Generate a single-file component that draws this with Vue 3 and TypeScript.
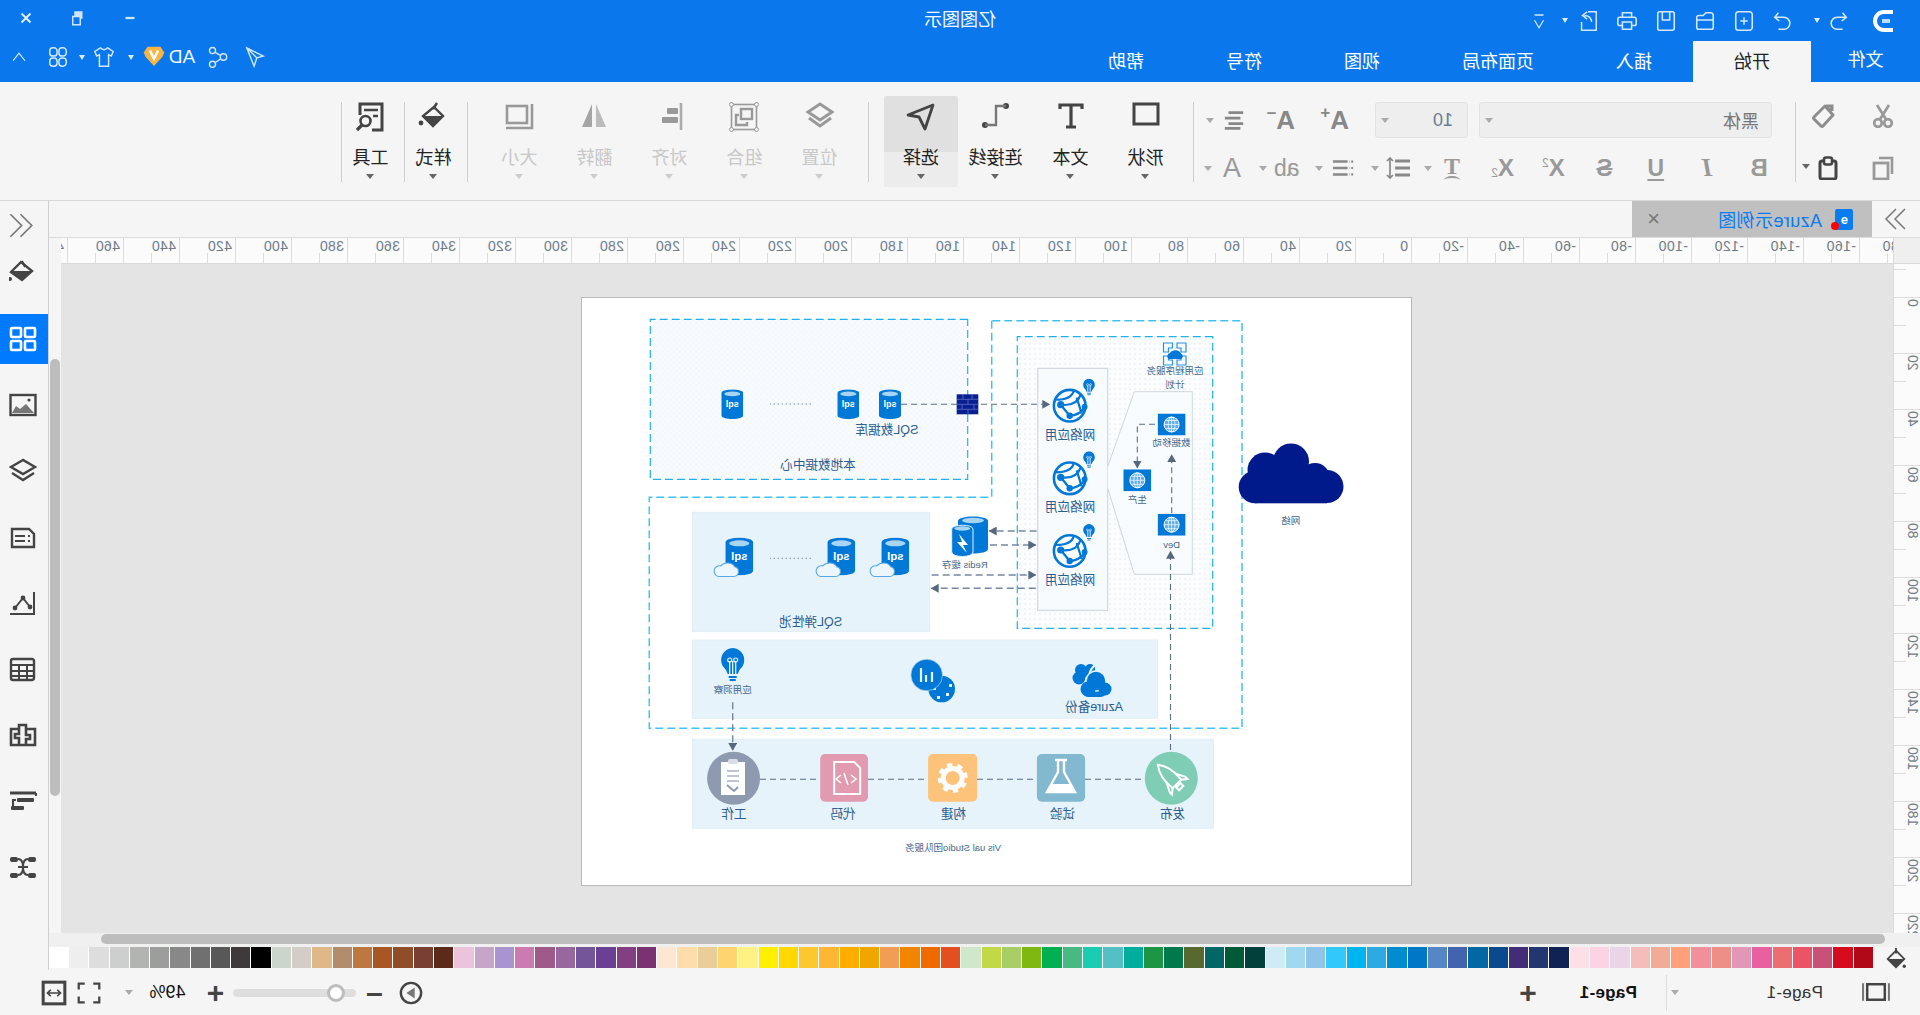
<script setup lang="ts">
const G = '#999'
const D = '#444'
const W = '#fff'
const icons: Record<string, string> = {
  logo: `<path d="M4 4H13A9 9 0 0 1 13 22H4" fill="none" stroke="${W}" stroke-width="4"/><path d="M7 13H15" stroke="#b9dcff" stroke-width="4"/>`,
  undo: `<path d="M7 3L3 8L8 12M4 8H13A6.5 6.5 0 0 1 13 21H7" fill="none" stroke="#d4e8ff" stroke-width="1.7"/>`,
  redo: `<path d="M17 3L21 8L16 12M20 8H11A6.5 6.5 0 0 0 11 21H17" fill="none" stroke="#d4e8ff" stroke-width="1.7"/>`,
  newf: `<rect x="3" y="2" width="18" height="20" rx="3" fill="none" stroke="#d4e8ff" stroke-width="1.7"/><path d="M8 12H16M12 8V16" stroke="#d4e8ff" stroke-width="1.6"/>`,
  open: `<path d="M3 20V6Q3 3 6 3H11L14 6H19Q21 6 21 8V19Q21 21 19 21H5Q3 21 3 19ZM3 11H21" fill="none" stroke="#d4e8ff" stroke-width="1.7"/>`,
  save: `<path d="M3 4Q3 2 5 2H19Q21 2 21 4V20Q21 22 19 22H5Q3 22 3 20ZM8 2V11H16V2M8 22" fill="none" stroke="#d4e8ff" stroke-width="1.7"/>`,
  print: `<path d="M7 8V3H17V8M7 17H4Q2 17 2 15V10Q2 8 4 8H20Q22 8 22 10V15Q22 17 20 17H17M7 13H17V21H7Z" fill="none" stroke="#d4e8ff" stroke-width="1.7"/>`,
  exportf: `<path d="M12 2H3V22H19V13M8 13Q9 6 16 6M13 2L18 6L13 10" fill="none" stroke="#d4e8ff" stroke-width="1.6"/>`,
  more: `<path d="M6 4H18" stroke="#d4e8ff" stroke-width="2"/><path d="M6 11L12 21L18 11" fill="none" stroke="#d4e8ff" stroke-width="1.6"/>`,
  minimize: `<path d="M6 12H18" stroke="#cfe5ff" stroke-width="3"/>`,
  restore: `<rect x="6" y="3" width="11" height="10" fill="#cfe5ff"/><rect x="9" y="10" width="10" height="11" fill="#0a78ec" stroke="#cfe5ff" stroke-width="2"/>`,
  closew: `<path d="M6 6L18 18M18 6L6 18" stroke="#e6f1ff" stroke-width="2.4"/>`,
  chevup: `<path d="M4 17L12 7L20 17" fill="none" stroke="#e0eeff" stroke-width="1.6"/>`,
  tiles: `<rect x="3" y="2" width="8" height="9" rx="3.5" fill="none" stroke="#d4e8ff" stroke-width="1.6"/><rect x="13" y="2" width="8" height="9" rx="3.5" fill="none" stroke="#d4e8ff" stroke-width="1.6"/><rect x="3" y="13" width="8" height="9" rx="3.5" fill="none" stroke="#d4e8ff" stroke-width="1.6"/><rect x="13" y="13" width="8" height="9" rx="3.5" fill="none" stroke="#d4e8ff" stroke-width="1.6"/>`,
  shirt: `<path d="M8 2L2 6L4 11L7 9.5V22H17V9.5L20 11L22 6L16 2Q12 6 8 2Z" fill="none" stroke="#d4e8ff" stroke-width="1.6"/>`,
  badge: `<path d="M5 2H19L23 8Q23 10 21 13L12 23L3 13Q1 10 1 8Z" fill="#f9b443"/><path d="M7.5 6L12 15L16.5 6" fill="none" stroke="#fff" stroke-width="2.8"/>`,
  share: `<circle cx="18" cy="5" r="3.3" fill="none" stroke="#d4e8ff" stroke-width="1.5"/><circle cx="6" cy="12" r="3.5" fill="none" stroke="#d4e8ff" stroke-width="1.5"/><circle cx="18" cy="20" r="3.3" fill="none" stroke="#d4e8ff" stroke-width="1.5"/><path d="M15 7L9 10.5M9 14L15 18" stroke="#d4e8ff" stroke-width="1.5"/>`,
  send: `<path d="M21 2L3 11L10 13L13 22ZM21 2L10 13" fill="none" stroke="#d4e8ff" stroke-width="1.5"/>`,
  cut: `<circle cx="7" cy="19" r="3.8" fill="none" stroke="${G}" stroke-width="2.7"/><circle cx="17" cy="19" r="3.8" fill="none" stroke="${G}" stroke-width="2.7"/><path d="M8.5 16L18 1M15.5 16L6 1" stroke="${G}" stroke-width="2.7"/>`,
  copy: `<rect x="7" y="7" width="14" height="16" fill="none" stroke="${G}" stroke-width="2.8"/><path d="M3 18V2H16" fill="none" stroke="${G}" stroke-width="2.6"/>`,
  painter: `<path d="M14 2L19 6L21 4M14 2L3 13Q2 14 3 15L10 22Q11 23 12 22L22 11Z" fill="none" stroke="#8d8d8d" stroke-width="3" stroke-linejoin="round" transform="matrix(-1 0 0 1 24 0)"/><path d="M9 2H3V7" fill="none" stroke="#8d8d8d" stroke-width="3"/>`,
  paste: `<rect x="4" y="5" width="16" height="18" rx="2" fill="none" stroke="${D}" stroke-width="3"/><rect x="8" y="1.500" width="8" height="7" rx="2" fill="#f5f5f5" stroke="${D}" stroke-width="2.6"/>`,
  align: `<path d="M2 4H18M5 10H22M2 16H18M5 21H22" stroke="#888" stroke-width="3"/>`,
  spacing: `<path d="M2 5H17M2 12H17M2 19H17" stroke="#888" stroke-width="2.8"/><path d="M22 2V22M19 5L22 2L25 5M19 19L22 22L25 19" fill="none" stroke="#888" stroke-width="1.7"/>`,
  list: `<path d="M1 5H5M1 12H5M1 19H5" stroke="#888" stroke-width="2.4" stroke-dasharray="2 1.5"/><path d="M7 5H23M7 12H23M7 19H23" stroke="#888" stroke-width="2.8"/>`,
  shape: `<rect x="2" y="2" width="24" height="20" fill="none" stroke="${D}" stroke-width="3"/>`,
  texticon: `<path d="M3 7V3H25V7M14 3V25M9 25H19" fill="none" stroke="${D}" stroke-width="3.2"/>`,
  connector: `<circle cx="4" cy="4" r="3" fill="${D}"/><circle cx="25" cy="23" r="3" fill="${D}"/><path d="M4 4H14V23H25" fill="none" stroke="#777" stroke-width="2.4"/>`,
  pointer: `<path d="M3 3L28 13L17 15L11 27Z" fill="none" stroke="${D}" stroke-width="2.8" stroke-linejoin="round"/>`,
  layers: `<path d="M14 2L26 10L14 18L2 10Z" fill="none" stroke="${G}" stroke-width="3"/><path d="M3 16L14 24L25 16" fill="none" stroke="${G}" stroke-width="3"/>`,
  group: `<rect x="2.5" y="2.5" width="25" height="25" fill="none" stroke="${G}" stroke-width="1.6"/><circle cx="2.5" cy="2.5" r="2" fill="#f5f5f5" stroke="${G}"/><circle cx="27.5" cy="2.5" r="2" fill="#f5f5f5" stroke="${G}"/><circle cx="2.5" cy="27.5" r="2" fill="#f5f5f5" stroke="${G}"/><circle cx="27.5" cy="27.5" r="2" fill="#f5f5f5" stroke="${G}"/><rect x="7" y="7" width="11" height="10" fill="none" stroke="${G}" stroke-width="2.4"/><path d="M20 13H23V23H12V20" fill="none" stroke="${G}" stroke-width="2.4"/>`,
  alignb: `<path d="M3 1V28" stroke="#aaa" stroke-width="2.6"/><rect x="6" y="6" width="11" height="6" rx="1" fill="${G}"/><rect x="6" y="15" width="16" height="6" rx="1" fill="${G}"/>`,
  flip: `<path d="M3 25L13 2V25Z" fill="#bbb"/><path d="M17 2L27 25H17Z" fill="#a5a5a5"/>`,
  size: `<rect x="7" y="4" width="20" height="17" fill="none" stroke="${G}" stroke-width="2.6"/><path d="M2 2V26H28" fill="none" stroke="${G}" stroke-width="2.6"/>`,
  style: `<path d="M11 1L15 7" stroke="${D}" stroke-width="2.5"/><path d="M14 5L25 14L15 24L5 14Z" fill="none" stroke="${D}" stroke-width="2.4"/><path d="M5 14H25L15 24Z" fill="${D}"/><circle cx="27" cy="21" r="2.400" fill="${D}"/>`,
  tool: `<path d="M25 13V2H3V28H13" fill="none" stroke="${D}" stroke-width="3"/><path d="M7 8H21M7 14H12" stroke="${D}" stroke-width="2.4"/><circle cx="19.500" cy="19" r="5" fill="none" stroke="${D}" stroke-width="2.6"/><path d="M23 23L28 28" stroke="${D}" stroke-width="3.2"/>`,
  bucket: `<path d="M16 3L26 13L15 21L5 12Z" fill="none" stroke="${D}" stroke-width="2.4"/><path d="M5 12H26L15 21Z" fill="${D}"/><path d="M15 2L12 8" stroke="${D}" stroke-width="2"/><circle cx="27" cy="20" r="2" fill="${D}"/>`,
  gridnav: `<rect x="2" y="3" width="10" height="9" rx="1" fill="none" stroke="#fff" stroke-width="2.6"/><rect x="16" y="3" width="10" height="9" rx="1" fill="none" stroke="#fff" stroke-width="2.6"/><rect x="2" y="16" width="10" height="9" rx="1" fill="none" stroke="#fff" stroke-width="2.6"/><rect x="16" y="16" width="10" height="9" rx="1" fill="none" stroke="#fff" stroke-width="2.6"/>`,
  image: `<rect x="1.5" y="4" width="25" height="20" fill="none" stroke="${D}" stroke-width="2.4"/><path d="M3 22L11 13L17 18L21 15L25 22Z" fill="#777"/><circle cx="8" cy="9" r="1.6" fill="${D}"/>`,
  layersnav: `<path d="M14 3L26 10L14 17L2 10Z" fill="none" stroke="${D}" stroke-width="2.4"/><path d="M3 16L14 23L25 16" fill="none" stroke="${D}" stroke-width="2.4"/>`,
  note: `<path d="M3 6H20L25 11V24H3Z" fill="none" stroke="${D}" stroke-width="2.4" transform="matrix(-1 0 0 1 28 0)"/><path d="M7 13H9M7 18H9M12 13H22M12 18H22" stroke="${D}" stroke-width="2"/>`,
  chart: `<path d="M3 3V25H27" fill="none" stroke="${D}" stroke-width="2"/><path d="M7 18L14 9L22 19" fill="none" stroke="${D}" stroke-width="2"/><circle cx="7" cy="18" r="2.4" fill="${D}"/><circle cx="14" cy="9" r="2.4" fill="${D}"/><circle cx="22" cy="19" r="2.4" fill="${D}"/>`,
  table: `<rect x="3" y="4" width="23" height="21" rx="2" fill="none" stroke="${D}" stroke-width="2.4"/><path d="M3 10H26M3 16H26M3 21H26M10 10V25M18 10V25" stroke="${D}" stroke-width="2"/>`,
  puzzle: `<path d="M2 8H11V4H18V8H26V24H2Z M11 8V14H7V18H11V24 M18 8V13H22V17H18V24" fill="none" stroke="${D}" stroke-width="2.6"/>`,
  org: `<path d="M1 6H27" stroke="${D}" stroke-width="3"/><path d="M1 6V9" stroke="${D}" stroke-width="2"/><rect x="3" y="11" width="17" height="4" rx="1" fill="${D}"/><path d="M21 13H24V19" fill="none" stroke="${D}" stroke-width="2"/><rect x="13" y="19" width="13" height="4" rx="1" fill="${D}"/>`,
  links: `<rect x="1" y="4" width="8" height="5" rx="2" fill="${D}"/><rect x="19" y="4" width="8" height="5" rx="2" fill="${D}"/><rect x="1" y="20" width="8" height="5" rx="2" fill="${D}"/><rect x="19" y="20" width="8" height="5" rx="2" fill="${D}"/><path d="M9 6Q14 6 14 14Q14 22 9 22M19 6Q14 6 14 14Q14 22 19 22M9 14H19" fill="none" stroke="${D}" stroke-width="2"/>`,
  picker: `<path d="M12 4L21 13L12 22L3 13Z" fill="none" stroke="${D}" stroke-width="2"/><path d="M3 13H21L12 22Z" fill="${D}"/><path d="M12 1V7" stroke="${D}" stroke-width="2"/><circle cx="3" cy="21" r="1.8" fill="${D}"/>`,
  fit: `<rect x="2" y="2" width="20" height="20" fill="none" stroke="${D}" stroke-width="2.8"/><path d="M6 12H18M9 9L6 12L9 15M15 9L18 12L15 15" fill="none" stroke="${D}" stroke-width="1.6"/>`,
  full: `<path d="M2 9V2H9M19 2H26V9M2 17V24H9M19 24H26V17" fill="none" stroke="${D}" stroke-width="2.6"/>`,
  play: `<circle cx="13" cy="13" r="11" fill="none" stroke="${D}" stroke-width="2.6"/><path d="M18 7V19L9 13Z" fill="#777" transform="matrix(-1 0 0 1 27 0)"/>`,
  sheets: `<rect x="6" y="3" width="17" height="15" fill="none" stroke="${D}" stroke-width="2.4"/><path d="M2 2V19M27 2V19" stroke="#777" stroke-width="2"/>`,
  chevdouble: `<path d="M3 2L13 12L3 22M12 2L22 12L12 22" fill="none" stroke="#777" stroke-width="1.5"/>`,
  chevback: `<path d="M21 2L11 12L21 22M12 2L2 12L12 22" fill="none" stroke="#777" stroke-width="1.5"/>`,
}

const quick = ['newf', 'open', 'save', 'print', 'exportf']
const tabs = ['文件', '开始', '插入', '页面布局', '视图', '符号', '帮助']
const insertBtns = [
  { icon: 'shape', label: '形状' },
  { icon: 'texticon', label: '文本' },
  { icon: 'connector', label: '连接线' },
  { icon: 'pointer', label: '选择', active: true },
]
const arrangeBtns = [
  { icon: 'layers', label: '位置' },
  { icon: 'group', label: '组合' },
  { icon: 'alignb', label: '对齐' },
  { icon: 'flip', label: '翻转' },
  { icon: 'size', label: '大小' },
]
const sideIcons = ['bucket', 'gridnav', 'image', 'layersnav', 'note', 'chart', 'table', 'puzzle', 'org', 'links']

const hValues: number[] = []
for (let v = -180; v <= 480; v += 20) hValues.push(v)
const vValues: number[] = []
for (let v = -20; v <= 220; v += 20) vValues.push(v)

const palette = ['#ffffff','#eeeeee','#dddddd','#cdcfce','#b2b4b2','#9c9e9c','#888888','#707070','#585858','#3e3a39','#000000','#cbd5cb','#d4ccc6','#deb887','#b38b6d','#bd783f','#a85624','#8f4e28','#7a3e32','#5b2a1a','#ebc4dc','#c7a5c8','#aa94cf','#cc7bb0','#9e5a8a','#98679d','#745599','#6a4095','#823f82','#7a3272','#fde7d2','#ffdcaa','#ebcd97','#ffd36e','#fff285','#fff000','#ffd800','#fcc82d','#ffb633','#ffae00','#f0a500','#f39c55','#f28500','#ef6a00','#e44f22','#cfe8ca','#c1d946','#a7cf65','#7fb810','#00b050','#47b983','#19ccb2','#54bfc4','#00ae9e','#1c9644','#00794c','#58692f','#006666','#005a36','#00423b','#cfebf5','#a0d9ef','#8ec3ea','#33c8fb','#00b4f0','#2eaae3','#008dd0','#0078c8','#5687c4','#4264ae','#0168a4','#0a4a8c','#432d77','#223771','#0f2255','#fce0e5','#fcd3e3','#e9d5e7','#f5bdb9','#f0ac97','#ffa07a','#f1909b','#ee8e87','#e297b6','#e860a0','#ec6e72','#ea5466','#c85179','#d60b1e','#b30818'].reverse()

const webApps = [108.7, 181.3, 254]
const slots = [
  { x: 240.4, y: 127.5, label: '数据移动', ly: 145.7 },
  { x: 274.7, y: 183.3, label: '生产', ly: 202 },
  { x: 240.4, y: 227.7, label: 'Dev', ly: 247.7 },
]
const sqlCloud = [672.7, 570.7, 516.7]
const squares = [
  { x: 544, w: 47.8, c: '#e29ab0' },
  { x: 434.8, w: 49.1, c: '#fdc37b' },
  { x: 326.9, w: 48.2, c: '#82b8d0' },
]
const flowLabels = [
  { x: 678, t: '工作' },
  { x: 569, t: '代码' },
  { x: 458.6, t: '构建' },
  { x: 349.4, t: '试验' },
  { x: 239.5, t: '发布' },
]
</script>

<template>
  <div class="app">
    <header class="chrome">
      <div class="title-row">
        <svg class="ic logo" viewBox="0 0 24 26" v-html="icons.logo"></svg>
        <svg class="ic t22 ml24" viewBox="0 0 24 24" v-html="icons.undo"></svg>
        <i class="caret white m-caret"></i>
        <svg class="ic t22 ml21" viewBox="0 0 24 24" v-html="icons.redo"></svg>
        <svg v-for="q in quick" :key="q" class="ic t22 ml17" viewBox="0 0 24 24" v-html="icons[q]"></svg>
        <i class="caret white m-caret2"></i>
        <svg class="ic t18 ml14" viewBox="0 0 24 24" v-html="icons.more"></svg>
        <span class="app-title">亿图图示</span>
        <div class="win">
          <span class="win-btn"><svg class="ic t18" viewBox="0 0 24 24" v-html="icons.minimize"></svg></span>
          <span class="win-btn"><svg class="ic t18" viewBox="0 0 24 24" v-html="icons.restore"></svg></span>
          <span class="win-btn"><svg class="ic t18" viewBox="0 0 24 24" v-html="icons.closew"></svg></span>
        </div>
      </div>
      <div class="tab-row">
        <span v-for="(t, i) in tabs" :key="t" class="tab" :class="{ on: i === 1, first: i === 0 }">{{ t }}</span>
        <div class="tools">
          <svg class="ic t22 w36" viewBox="0 0 24 24" v-html="icons.send"></svg>
          <svg class="ic t22 w38" viewBox="0 0 24 24" v-html="icons.share"></svg>
          <span class="ad">AD</span>
          <svg class="ic badge" viewBox="0 0 24 24" v-html="icons.badge"></svg>
          <i class="caret white m-a"></i>
          <svg class="ic t22 ml13" viewBox="0 0 24 24" v-html="icons.shirt"></svg>
          <i class="caret white m-b"></i>
          <svg class="ic t22" viewBox="0 0 24 24" v-html="icons.tiles"></svg>
          <svg class="ic t18 chev" viewBox="0 0 24 24" v-html="icons.chevup"></svg>
        </div>
      </div>
    </header>

    <section class="ribbon">
      <div class="clip">
        <span class="cell"><svg class="ic t24" viewBox="0 0 24 24" v-html="icons.cut"></svg></span>
        <span class="cell"><svg class="ic t24" viewBox="0 0 24 24" v-html="icons.painter"></svg></span>
        <span class="cell"><svg class="ic t24" viewBox="0 0 24 24" v-html="icons.copy"></svg></span>
        <span class="cell pastecell"><svg class="ic t24" viewBox="0 0 24 24" v-html="icons.paste"></svg><i class="caret dark c-right"></i></span>
      </div>
      <i class="sep"></i>
      <div class="fontbox">
        <div class="fontrow">
          <div class="sel font-sel"><span class="sel-text">黑体</span><i class="caret soft"></i></div>
          <div class="sel size-sel"><span class="sel-num">10</span><i class="caret soft"></i></div>
          <span class="glyph grow">A<sup>+</sup></span>
          <span class="glyph shrink">A<sup>–</sup></span>
          <span class="fcell align"><svg class="ic t22" viewBox="0 0 24 24" v-html="icons.align"></svg><i class="caret soft cc"></i></span>
        </div>
        <div class="fmt">
          <span class="fcell b">B</span>
          <span class="fcell it">I</span>
          <span class="fcell un">U</span>
          <span class="fcell st">S</span>
          <span class="fcell xs">X<sup>2</sup></span>
          <span class="fcell xs">X<sub>2</sub></span>
          <span class="fcell tt">T<i class="arc"></i><i class="caret soft cc"></i></span>
          <span class="fcell"><svg class="ic sp" viewBox="0 0 26 24" v-html="icons.spacing"></svg><i class="caret soft cc"></i></span>
          <span class="fcell"><svg class="ic t22" viewBox="0 0 24 24" v-html="icons.list"></svg><i class="caret soft cc"></i></span>
          <span class="fcell ab">ab<i class="caret soft cc"></i></span>
          <span class="fcell la">A<i class="caret soft cc"></i></span>
        </div>
      </div>
      <i class="sep"></i>
      <div class="bigs first-bigs">
        <div v-for="b in insertBtns" :key="b.label" class="big" :class="{ active: b.active }">
          <svg class="ic big-ic" viewBox="0 0 30 30" v-html="icons[b.icon]"></svg>
          <span class="big-label">{{ b.label }}</span>
          <i class="caret dark"></i>
        </div>
      </div>
      <i class="sep sep-a"></i>
      <div class="bigs second-bigs">
        <div v-for="b in arrangeBtns" :key="b.label" class="big off">
          <svg class="ic big-ic" viewBox="0 0 30 30" v-html="icons[b.icon]"></svg>
          <span class="big-label">{{ b.label }}</span>
          <i class="caret light"></i>
        </div>
      </div>
      <i class="sep sep-b"></i>
      <div class="big narrow">
        <svg class="ic big-ic" viewBox="0 0 30 30" v-html="icons.style"></svg>
        <span class="big-label">样式</span>
        <i class="caret dark"></i>
      </div>
      <i class="sep"></i>
      <div class="big narrow">
        <svg class="ic big-ic" viewBox="0 0 30 30" v-html="icons.tool"></svg>
        <span class="big-label">工具</span>
        <i class="caret dark"></i>
      </div>
      <i class="sep"></i>
    </section>

    <main class="main">
      <div class="workspace">
        <div class="tabstrip">
          <svg class="ic dbl" viewBox="0 0 24 24" v-html="icons.chevdouble"></svg>
          <div class="doc-tab">
            <span class="doc-logo"><i class="doc-dot"></i><b>e</b></span>
            <span class="doc-name">Azure示例图</span>
            <span class="doc-x">×</span>
          </div>
        </div>
        <div class="work">
          <div class="rulered">
            <div class="hrow">
              <div class="corner"></div>
              <div class="hruler">
                <div v-for="v in hValues" :key="v" class="hcell"><span>{{ v }}</span></div>
              </div>
            </div>
            <div class="body">
              <div class="vruler">
                <div v-for="v in vValues" :key="v" class="vcell"><span v-if="v >= 0">{{ v }}</span></div>
              </div>
              <div class="canvas">
                <div class="page">
                  <svg class="diagram" width="831" height="589" viewBox="0 0 831 589">
                    <defs>
                      <pattern id="hatch" width="4" height="4" patternUnits="userSpaceOnUse" patternTransform="rotate(45)">
                        <rect width="4" height="4" fill="#f9fcfe" />
                        <path d="M0 0H4M0 0V4" stroke="#eef5fa" stroke-width="1" />
                      </pattern>
                      <pattern id="dots" width="5" height="5" patternUnits="userSpaceOnUse">
                        <rect width="5" height="5" fill="#fcfdfe" />
                        <circle cx="2" cy="2" r=".7" fill="#dbe6ef" />
                      </pattern>
                      <marker id="arr" viewBox="0 0 10 10" refX="9" refY="5" markerWidth="8" markerHeight="9" markerUnits="userSpaceOnUse" orient="auto-start-reverse" preserveAspectRatio="none">
                        <path d="M0 0L10 5L0 10Z" fill="#56677f" />
                      </marker>
                      <symbol id="db" viewBox="0 0 22 30">
                        <path d="M0 4C0 -1 22 -1 22 4V26C22 31 0 31 0 26Z" fill="#0078d7" />
                        <ellipse cx="11" cy="4.6" rx="8" ry="2.4" fill="#a9d5f5" />
                        <text x="11" y="18" class="sqltxt">sql</text>
                      </symbol>
                      <symbol id="cloudline" viewBox="0 0 28 18">
                        <path d="M6.5 17A5 5 0 0 1 5.5 7.2A8 6.4 0 0 1 19.5 6.4A5.4 5.4 0 0 1 22 17Z" fill="#edf6fb" stroke="#57a9e6" stroke-width="1.1" />
                      </symbol>
                      <symbol id="webapp" viewBox="-18 -18 36 36">
                        <circle r="15.8" fill="#fbfdff" stroke="#0078d7" stroke-width="2.6" />
                        <path d="M-11 -11Q-7 1 9 -1M-4 -15Q-2 -6 14 -6M9 -1L0 10M-16 1Q-9 10 0 10M-7 -8L-12 8" fill="none" stroke="#0078d7" stroke-width="2.2" />
                        <circle cx="9" cy="-1" r="3.6" fill="#0078d7" />
                        <circle cx="0" cy="10" r="3.2" fill="#0078d7" />
                        <circle cx="-15" cy="1" r="3" fill="#0078d7" />
                      </symbol>
                      <symbol id="bulb" viewBox="0 0 24 36">
                        <path d="M12 0A12 12 0 0 1 22 18Q18 22 17 26H7Q6 22 2 18A12 12 0 0 1 12 0Z" fill="#0078d7" />
                        <path d="M9 26V13M15 26V13M12 26V13" stroke="#e6f3fa" stroke-width="1.3" />
                        <circle cx="9" cy="12" r="2" fill="none" stroke="#e6f3fa" stroke-width="1.2" />
                        <circle cx="15" cy="12" r="2" fill="none" stroke="#e6f3fa" stroke-width="1.2" />
                        <path d="M8 29H16M9 32H15" stroke="#0078d7" stroke-width="1.8" />
                      </symbol>
                      <symbol id="slot" viewBox="0 0 28 22">
                        <rect width="28" height="22" fill="#0078d7" />
                        <circle cx="14" cy="11" r="7.5" fill="#62aee8" stroke="#fff" stroke-width="1" />
                        <path d="M6.5 11H21.5M14 3.5V18.5M8 7H20M8 15H20" stroke="#fff" stroke-width=".7" />
                        <ellipse cx="14" cy="11" rx="3.4" ry="7.5" fill="none" stroke="#fff" stroke-width=".7" />
                      </symbol>
                    </defs>

                    <path d="M420.3 23.7V200.3H762.7V431.3H170V23.7Z" class="outer" />

                    <rect x="444.3" y="22.3" width="317.4" height="160" fill="url(#hatch)" class="dash" />
                    <text x="594" y="168" class="t12">本地数据中心</text>
                    <use href="#db" x="668.7" y="92.3" width="22" height="30" />
                    <use href="#db" x="552.7" y="92.3" width="22" height="30" />
                    <use href="#db" x="511" y="92.3" width="22" height="30" />
                    <text x="525" y="133" class="t12">SQL数据库</text>
                    <path d="M601 107H642" class="dotted" />

                    <rect x="199.3" y="39.7" width="195.4" height="291.6" fill="url(#dots)" class="dash" />

                    <rect x="304.3" y="71.3" width="70" height="242" fill="#f7fbfe" stroke="#c9d2de" />
                    <g v-for="y in webApps" :key="y">
                      <use href="#webapp" :x="324.3" :y="y - 18" width="36" height="36" />
                      <use href="#bulb" x="317" :y="y - 27" width="12" height="18" />
                      <text x="342" :y="y + 29" class="t12">网络应用</text>
                    </g>

                    <path d="M304.3 169.7L277.7 94.7H219.7V277.3H277.7L304.3 191.3" fill="#f9fcfe" stroke="#cfd6df" />
                    <use v-for="s in slots" :key="s.label" href="#slot" :x="s.x - 14" :y="s.y - 11" width="28" height="22" />
                    <text v-for="s in slots" :key="s.ly" :x="s.x" :y="s.ly" class="t9">{{ s.label }}</text>

                    <g>
                      <path d="M226 46H235V51H231V55H226ZM248.5 46H239.5V51H243.5V55H248.5ZM226 68H235V63H231V59H226ZM248.5 68H239.5V63H243.5V59H248.5Z" fill="#f5fafd" stroke="#2f8fe0" stroke-width="1.2" />
                      <path d="M231 62A3 3 0 0 1 231 56.5A6 5 0 0 1 242 56A3.2 3.2 0 0 1 243 62Z" fill="#0078d7" />
                    </g>
                    <text x="237" y="73.3" class="t9">应用程序服务</text>
                    <text x="237" y="87.7" class="t9">计划</text>

                    <g fill="#001a8c">
                      <circle cx="121" cy="164.5" r="18" />
                      <circle cx="147" cy="173" r="17.5" />
                      <circle cx="97" cy="181" r="15" />
                      <circle cx="85" cy="189.5" r="16.5" />
                      <circle cx="157" cy="190" r="16.3" />
                      <rect x="85" y="178" width="72" height="28.3" />
                    </g>
                    <text x="121.3" y="223.3" class="t9">网络</text>

                    <rect x="482.3" y="215.3" width="237.4" height="119.4" class="band" />
                    <text x="601.3" y="325" class="t12">SQL弹性池</text>
                    <g v-for="x in sqlCloud" :key="x">
                      <use href="#db" :x="x - 14" y="240.5" width="28" height="38" />
                      <use href="#cloudline" :x="x - 1" y="262.5" width="28" height="18" />
                    </g>
                    <path d="M601 261.3H642" class="dotted" />

                    <g>
                      <path d="M424 224C424 218 454 218 454 224V252C454 258 424 258 424 252Z" fill="#0078d7" />
                      <ellipse cx="439" cy="223.5" rx="11" ry="2.800" fill="#a9d5f5" />
                      <path d="M439 232C439 227 460.3 227 460.3 232V255C460.3 261 439 261 439 255Z" fill="#0078d7" stroke="#e8f2f9" stroke-width="1" />
                      <ellipse cx="449.700" cy="231.500" rx="8" ry="2.200" fill="#a9d5f5" />
                      <path d="M453 237L444 248H449L445 256L455 245H450Z" fill="#fff" />
                    </g>
                    <text x="447.3" y="267" class="t9">Redis 缓存</text>

                    <rect x="254.3" y="343" width="465.4" height="78.3" class="band" />
                    <use href="#bulb" x="667.3" y="351" width="24" height="36" />
                    <text x="679.3" y="392.7" class="t9">应用洞察</text>
                    <g>
                      <circle cx="470.3" cy="392" r="13.3" fill="#0078d7" />
                      <rect x="463" y="396" width="3" height="3" fill="#e6f3fa" />
                      <rect x="472" y="399" width="3" height="3" fill="#e6f3fa" />
                      <rect x="476" y="390" width="3" height="3" fill="#e6f3fa" />
                      <rect x="460" y="387" width="3" height="3" fill="#e6f3fa" />
                      <circle cx="485.3" cy="378" r="15.8" fill="#0078d7" stroke="#cfe5f5" stroke-width=".6" />
                      <path d="M480 375V385M486 378V385M491 371V385" stroke="#e6f3fa" stroke-width="2.2" />
                    </g>
                    <g fill="#0078d7">
                      <circle cx="331" cy="373" r="6" />
                      <circle cx="322" cy="372" r="5" />
                      <circle cx="333" cy="381" r="6.5" />
                      <rect x="317" y="370" width="14" height="10" />
                      <path d="M317 368Q326 377 320 380" fill="none" stroke="#e6f3fa" stroke-width="2" />
                      <rect x="305" y="386" width="25" height="14" rx="6.5" />
                      <circle cx="316" cy="384" r="10" stroke="#e6f3fa" stroke-width="1.5" />
                      <circle cx="307" cy="392" r="6.5" />
                      <circle cx="324" cy="392" r="7.5" />
                    </g>
                    <text x="318" y="410.3" class="t12">Azure备份</text>

                    <rect x="198.4" y="442.3" width="521.1" height="89" class="band" />
                    <path d="M652 482.3H592M544 482.3H484M435 482.3H375M327 482.3H267" class="flow" />

                    <circle cx="678.4" cy="481.3" r="26.5" fill="#8e9ab0" />
                    <rect x="667" y="465" width="24" height="33" fill="#fff" />
                    <rect x="674" y="462" width="10" height="5" rx="2" fill="#d8dde6" />
                    <path d="M673 474H685M673 479H685M673 484H685" stroke="#aab4c4" stroke-width="1.5" />
                    <path d="M674 490L678 494L685 488" fill="none" stroke="#8e9ab0" stroke-width="2" />

                    <rect v-for="s in squares" :key="s.x" :x="s.x" y="457" :width="s.w" height="47.7" rx="5" :fill="s.c" />
                    <path d="M558 465H578L584 471V497H558Z" fill="none" stroke="#fff" stroke-width="2" transform="matrix(-1 0 0 1 1135.8 0)" />
                    <path d="M561 478L556 482L561 486M571 478L576 482L571 486M568 476L564 488" fill="none" stroke="#fff" stroke-width="1.5" />
                    <circle cx="459.3" cy="481" r="9.5" fill="none" stroke="#fff" stroke-width="5" />
                    <circle cx="459.3" cy="481" r="13" fill="none" stroke="#fff" stroke-width="4" stroke-dasharray="5.2 5" />
                    <path d="M345 463H357M347 463H355M348 463V475L337 495H365L354 475V463" fill="none" stroke="#fff" stroke-width="2.4" />
                    <path d="M342 487H360L364 495H338Z" fill="#fff" />

                    <circle cx="240.7" cy="481.3" r="26.5" fill="#7fcdb4" />
                    <g transform="translate(240.7 481.3) rotate(45)" fill="none" stroke="#fff" stroke-width="2">
                      <path d="M0 -19Q8 -9 6 8H-6Q-8 -9 0 -19Z" />
                      <path d="M-6 -1L-11 9V12L-6 8M6 -1L11 9V12L6 8M-3 10H3V14H-3Z" />
                    </g>
                    <text v-for="f in flowLabels" :key="f.t" :x="f.x" y="517" class="t12">{{ f.t }}</text>
                    <text x="459" y="550.7" class="t9 vs">Vis ual Studio团队服务</text>

                    <path d="M511 107.3H362.5" class="flow" marker-end="url(#arr)" />
                    <g>
                      <rect x="433.7" y="97.3" width="21.6" height="20" fill="#0a1f8f" />
                      <path d="M433.7 102.3H455.3M433.7 107.3H455.3M433.7 112.3H455.3M440 97.3V102.3M449 97.3V102.3M444 102.3V107.3M438 107.3V112.3M450 107.3V112.3M444 112.3V117.3" stroke="#5f6fc8" stroke-width=".8" fill="none" />
                    </g>
                    <path d="M257 127.3H274.7V170.7" class="flow" marker-end="url(#arr)" />
                    <path d="M240.3 216.3V158" class="flow" marker-end="url(#arr)" />
                    <path d="M241.5 453V254.5" class="flow" marker-end="url(#arr)" />
                    <path d="M375.3 234H422.5" class="flowb" marker-end="url(#arr)" />
                    <path d="M422 248H376.5" class="flowb" marker-end="url(#arr)" />
                    <path d="M480.3 278H376.5" class="flowb" marker-end="url(#arr)" />
                    <path d="M376.3 291.3H480.5" class="flowb" marker-end="url(#arr)" />
                    <path d="M679.3 405.3V453" class="flowb" marker-end="url(#arr)" />
                  </svg>
                </div>
              </div>
            </div>
          </div>
          <div class="vscroll"><i class="vthumb"></i></div>
        </div>
        <div class="hscroll"><i class="hthumb"></i></div>
        <div class="palette-row">
          <svg class="ic pick" viewBox="0 0 24 24" v-html="icons.picker"></svg>
          <div class="palette">
            <span v-for="(c, i) in palette" :key="i" class="swatch" :style="{ background: c }"></span>
          </div>
        </div>
      </div>
      <aside class="sidebar">
        <div class="side-top"><svg class="ic t27" viewBox="0 0 24 24" v-html="icons.chevback"></svg></div>
        <div class="side-list">
          <span v-for="s in sideIcons" :key="s" class="side-item" :class="{ on: s === 'gridnav' }">
            <svg class="ic side-ic" viewBox="0 0 28 28" v-html="icons[s]"></svg>
          </span>
        </div>
      </aside>
    </main>

    <footer class="status">
      <svg class="ic sheet" viewBox="0 0 29 22" v-html="icons.sheets"></svg>
      <span class="pg">Page-1</span>
      <i class="caret soft st-caret"></i>
      <i class="st-sep"></i>
      <span class="pg bold">Page-1</span>
      <span class="plus addp">+</span>
      <div class="zoomer">
        <svg class="ic t24" viewBox="0 0 26 26" v-html="icons.play"></svg>
        <span class="plus minus">–</span>
        <div class="slider"><i class="knob"></i></div>
        <span class="plus zplus">+</span>
        <span class="pct">49%</span>
        <i class="caret soft zc"></i>
        <svg class="ic fullic" viewBox="0 0 28 26" v-html="icons.full"></svg>
        <svg class="ic fitic" viewBox="0 0 24 24" v-html="icons.fit"></svg>
      </div>
    </footer>
  </div>
</template>

<style>
html, body { margin: 0; background: #f5f5f5; overflow: hidden; }
</style>

<style scoped>
.app {
  width: 1920px; height: 1015px; overflow: hidden; position: relative;
  transform: scaleX(-1); background: #f5f5f5;
  font-family: "Liberation Sans", "Noto Sans CJK SC", sans-serif; color: #222;
  display: flex; flex-direction: column;
}
.ic { display: block; flex: none; }
.t18 { width: 18px; height: 18px; }
.t22 { width: 22px; height: 22px; }
.t24 { width: 24px; height: 24px; }
.t27 { width: 27px; height: 27px; }
.caret { display: block; flex: none; width: 0; height: 0; border-left: 4px solid transparent; border-right: 4px solid transparent; border-top: 5px solid #666; }
.caret.white { border-top-color: #dcecff; border-left-width: 3.5px; border-right-width: 3.5px; }
.caret.dark { border-top-color: #666; }
.caret.light { border-top-color: #ccc; }
.caret.soft { border-top-color: #aaa; }

.chrome { background: #0a78ec; height: 82px; flex: none; color: #fff; }
.title-row { height: 41px; display: flex; align-items: center; padding-left: 23px; position: relative; }
.logo { width: 24px; height: 26px; }
.ml24 { margin-left: 24px; }
.ml21 { margin-left: 21px; }
.ml17 { margin-left: 17px; }
.ml14 { margin-left: 14px; }
.ml13 { margin-left: 13.5px; }
.m-caret { margin-left: 7px; margin-right: -1px; }
.m-caret2 { margin-left: 9px; }
.app-title { position: absolute; left: 924px; top: 7px; font-size: 18px; line-height: 26px; color: #f2f8ff; }
.win { display: flex; margin-left: auto; }
.win-btn { width: 52px; height: 36px; display: flex; align-items: center; justify-content: center; margin-bottom: 6px; }

.tab-row { height: 41px; display: flex; align-items: stretch; }
.tab { padding: 0 41px; font-size: 18px; line-height: 42px; color: #fff; }
.tab.first { padding: 0; width: 109px; text-align: center; line-height: 38px; }
.tab.on { background: #f5f5f5; color: #222; }
.tools { display: flex; align-items: center; margin-left: auto; justify-content: flex-end; padding-right: 10px; height: 32px; }
.w36 { margin-right: 15px; }
.w38 { margin-right: 10px; }
.ad { font-size: 19px; width: 30px; text-align: center; color: #eef5ff; margin-right: 1px; }
.badge { width: 24px; height: 22px; margin-bottom: 3px; }
.m-a { margin-left: 7.5px; }
.m-b { margin: 0 10.5px 0 7.5px; }
.chev { margin-left: 19px; }

.ribbon { height: 119px; flex: none; box-sizing: border-box; border-bottom: 1px solid #d9d9d9; display: flex; align-items: flex-start; background: #f5f5f5; }
.sep { display: block; flex: none; width: 1px; height: 80px; margin-top: 20px; background: #cfcfcf; }
.clip { width: 124px; box-sizing: border-box; padding: 8px 0 0 7px; display: grid; grid-template-columns: 60px 60px; grid-auto-rows: 52px; }
.cell { display: flex; align-items: center; justify-content: center; position: relative; }
.pastecell { padding-right: 10px; box-sizing: border-box; }
.c-right { position: absolute; left: 43px; top: 22px; }
.fontbox { width: 601px; box-sizing: border-box; padding: 20px 0 0 23px; }
.fontrow { display: flex; align-items: center; height: 36px; }
.sel { height: 36px; box-sizing: border-box; background: #eeeeee; border: 1px solid #e2e2e2; border-radius: 3px; display: flex; align-items: center; justify-content: space-between; padding: 0 5px 0 12px; }
.font-sel { width: 293px; margin-right: 11px; }
.size-sel { width: 93px; margin-right: 26px; padding-left: 14px; }
.sel-text { font-size: 18px; color: #777; }
.sel-num { font-size: 18px; color: #6a7c90; }
.glyph { color: #888; font-size: 26px; font-weight: 700; line-height: 30px; width: 30px; }
.glyph sup { font-size: 17px; line-height: 0; position: relative; top: -1px; }
.grow { margin-right: 24px; }
.shrink { margin-right: 8px; }
.fmt { display: grid; grid-template-columns: 52px 51.5px 51.5px 51px 51px 50.5px 51px 55px 57px 55.5px 54px; height: 36px; margin-top: 18px; margin-left: -13px; }
.fcell { position: relative; display: flex; align-items: center; justify-content: center; color: #999; font-size: 24px; height: 24px; }
.fcell.align { width: 52px; margin-left: -3px; }
.cc { position: absolute; left: calc(50% + 20px); top: 10px; }
.b { font-weight: 700; }
.it { font-family: "Liberation Serif", serif; font-style: italic; font-weight: 700; font-size: 26px; }
.un { text-decoration: underline; text-decoration-thickness: 2px; text-underline-offset: 3px; font-weight: 700; font-size: 23px; }
.st { text-decoration: line-through; text-decoration-thickness: 2px; font-size: 24px; font-weight: 700; }
.xs { font-size: 24px; font-weight: 700; }
.xs sup, .xs sub { font-size: 12px; font-weight: 400; }
.xs sup { align-self: flex-start; line-height: 14px; }
.xs sub { align-self: flex-end; line-height: 14px; }
.tt { font-weight: 700; font-family: "Liberation Serif", serif; flex-direction: column; line-height: 20px; }
.arc { display: block; width: 16px; height: 4px; border-top: 2px solid #999; border-radius: 50% 50% 0 0 / 100% 100% 0 0; box-sizing: border-box; }
.sp { width: 26px; height: 24px; }
.ab { font-size: 23px; }
.la { font-size: 27px; }

.bigs { display: flex; }
.first-bigs { margin-left: 10px; }
.second-bigs { margin-left: 11px; }
.sep-a { margin-left: 15px; }
.sep-b { margin-left: 14px; }
.big { width: 75px; height: 91px; margin-top: 14px; display: flex; flex-direction: column; align-items: center; }
.big.active { width: 74px; background: linear-gradient(#e0e0e0 0 56px, #ececec 56px); border-radius: 2px; }
.big-ic { width: 30px; height: 30px; margin-top: 6px; }
.big-label { font-size: 18px; line-height: 24px; margin-top: 14px; color: #222; white-space: nowrap; }
.big .caret { margin-top: 4px; }
.big.off .big-label { color: #c8c8c8; }
.narrow { width: 57px; padding-left: 5px; }

.main { height: 769px; flex: none; display: flex; }
.workspace { width: 1871px; flex: none; display: flex; flex-direction: column; }
.tabstrip { height: 37px; flex: none; box-sizing: border-box; border-bottom: 1px solid #dcdcdc; display: flex; align-items: stretch; padding-left: 12px; background: #f5f5f5; }
.dbl { width: 24px; height: 24px; align-self: center; margin-right: 12px; }
.doc-tab { width: 240px; background: #c0c0c0; display: flex; align-items: center; padding-left: 19px; box-sizing: border-box; }
.doc-logo { position: relative; width: 18px; height: 21px; background: #0a7bf0; border-radius: 2px; display: flex; align-items: center; justify-content: center; margin-right: 13px; }
.doc-logo b { color: #fff; font-size: 13px; line-height: 13px; transform: scaleX(-1); }
.doc-dot { position: absolute; right: -4px; bottom: 0; width: 8px; height: 8px; border-radius: 50%; background: #f00; }
.doc-name { font-size: 18px; letter-spacing: .4px; color: #0a7bf0; width: 162px; white-space: nowrap; }
.doc-x { font-size: 22px; color: #777; line-height: 22px; }

.work { height: 695px; flex: none; display: flex; }
.rulered { width: 1859px; flex: none; display: flex; flex-direction: column; }
.hrow { height: 26px; flex: none; display: flex; box-sizing: border-box; border-bottom: 1px solid #dadada; }
.corner { width: 27px; flex: none; background: #efefef; border-right: 1px solid #dadada; box-sizing: border-box; }
.hruler { flex: 1; min-width: 0; display: flex; overflow: hidden; background: #fbfbfb; }
.hcell { width: 56px; flex: none; box-sizing: border-box; border-left: 1px solid #dcdcdc; position: relative; padding-left: 3px; font-size: 14px; letter-spacing: .4px; line-height: 17px; color: #6d7a88; }
.hcell:first-child { margin-left: -23px; }
.hcell::after { content: ""; position: absolute; left: 27px; bottom: 0; height: 10px; width: 1px; background: #dcdcdc; }
.body { flex: 1; min-height: 0; display: flex; }
.vruler { width: 27px; flex: none; box-sizing: border-box; border-right: 1px solid #dadada; background: #fbfbfb; overflow: hidden; }
.vcell { height: 56px; box-sizing: border-box; border-top: 1px solid #dcdcdc; position: relative; font-size: 14px; color: #6d7a88; }
.vcell:first-child { margin-top: -23px; }
.vcell::after { content: ""; position: absolute; right: 0; top: 27px; width: 12px; height: 1px; background: #dcdcdc; }
.vcell span { position: absolute; left: -1px; top: 1px; writing-mode: vertical-rl; transform: rotate(180deg); line-height: 17px; }
.canvas { flex: 1; min-width: 0; background: #e4e4e4; padding: 33px 0 0 481px; box-sizing: border-box; overflow: hidden; }
.page { width: 831px; height: 589px; background: #fff; box-shadow: inset 0 0 0 1px #b9b9b9; }
.diagram { display: block; font-family: "Liberation Sans", "Noto Sans CJK SC", sans-serif; }
.t12 { font-size: 12.6px; fill: #2c5d8f; text-anchor: middle; dominant-baseline: central; }
.t9 { font-size: 9.5px; fill: #44688e; text-anchor: middle; dominant-baseline: central; }
.vs { font-size: 9.5px; }
.sqltxt { font-size: 9px; font-weight: 700; fill: #fff; text-anchor: middle; }
.dash { stroke: #1fb1ec; stroke-width: 1.2; stroke-dasharray: 8 4; }
.outer { fill: none; stroke: #3fc2f2; stroke-width: 1.5; stroke-dasharray: 8 4; }
.band { fill: #e6f3fa; stroke: #e3edf4; stroke-width: 1; }
.flow { fill: none; stroke: #5a6d88; stroke-width: 1.1; stroke-dasharray: 6 4; }
.flowb { fill: none; stroke: #7488a2; stroke-width: 1.4; stroke-dasharray: 7 4; }
.dotted { fill: none; stroke: #7b8ca3; stroke-width: 1; stroke-dasharray: 1.5 2.5; }

.vscroll { width: 12px; flex: none; background: #f5f5f5; padding-top: 121px; box-sizing: border-box; }
.vthumb { display: block; width: 10px; height: 437px; margin-left: 1px; background: #bdbdbd; border-radius: 5px; }
.hscroll { height: 14px; flex: none; box-sizing: border-box; padding: 1px 0 0 35px; background: #f0f0f0; }
.hthumb { display: block; width: 1784px; height: 10px; background: #bdbdbd; border-radius: 5px; }
.palette-row { height: 23px; flex: none; display: flex; align-items: flex-start; border-bottom: 1px solid #dcdcdc; }
.pick { width: 22px; height: 22px; margin-left: 13px; margin-right: 12px; }
.palette { flex: 1; display: flex; gap: 1px; height: 21px; background: #fff; }
.swatch { flex: 1; }

.sidebar { width: 49px; flex: none; box-sizing: border-box; border-left: 1px solid #cfcfcf; background: #f5f5f5; display: flex; flex-direction: column; }
.side-top { height: 37px; flex: none; display: flex; align-items: center; justify-content: center; padding: 12px 0 0 6px; box-sizing: border-box; }
.side-list { display: flex; flex-direction: column; padding-top: 10px; gap: 16px; }
.side-item { height: 50px; display: flex; align-items: center; justify-content: center; padding-left: 1px; }
.side-item.on { background: #007bff; }
.side-ic { width: 28px; height: 28px; }

.status { flex: 1; display: flex; align-items: center; background: #f5f5f5; }
.sheet { width: 30px; height: 23px; margin-left: 29px; }
.pg { font-size: 17px; letter-spacing: .3px; color: #333; margin-left: 38px; width: 57px; white-space: nowrap; }
.pg.bold { font-weight: 700; color: #111; margin-left: 29px; width: 62px; }
.st-caret { margin-left: 87px; }
.st-sep { display: block; width: 1px; height: 36px; background: #ddd; margin-left: 4px; }
.plus { font-size: 30px; line-height: 30px; color: #444; font-weight: 700; width: 20px; text-align: center; }
.addp { margin-left: 37px; }
.zoomer { margin-left: auto; display: flex; align-items: center; }
.minus { margin-left: 14.5px; }
.slider { position: relative; width: 123px; height: 8px; border-radius: 4px; background: #dedede; margin-left: 8px; }
.knob { position: absolute; left: 11px; top: -5px; width: 12px; height: 12px; border: 3px solid #bdbdbd; border-radius: 50%; background: #fff; }
.zplus { margin-left: 8px; }
.pct { font-size: 18px; color: #111; margin-left: 20px; width: 38px; }
.zc { margin-left: 14px; }
.fullic { width: 24px; height: 24px; margin-left: 24.5px; }
.fitic { width: 26px; height: 26px; margin-left: 10px; margin-right: 41px; }
</style>
